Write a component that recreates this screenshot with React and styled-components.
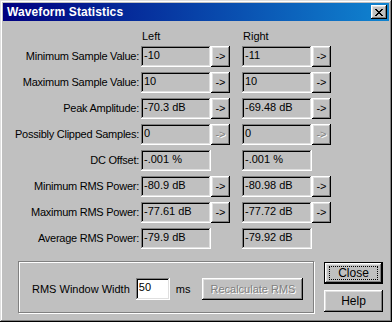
import styled, { createGlobalStyle } from "styled-components";

const GlobalStyle = createGlobalStyle`
  html, body {
    margin: 0;
    padding: 0;
    background: #c0c0c0;
  }
  body {
    font-family: "Liberation Sans", Arial, sans-serif;
    font-size: 11px;
    color: #000;
  }
`;

const ROWS = [
  { label: "Minimum Sample Value:", left: "-10", right: "-11", button: "on" },
  { label: "Maximum Sample Value:", left: "10", right: "10", button: "on" },
  { label: "Peak Amplitude:", left: "-70.3 dB", right: "-69.48 dB", button: "on" },
  { label: "Possibly Clipped Samples:", left: "0", right: "0", button: "off" },
  { label: "DC Offset:", left: "-.001 %", right: "-.001 %", button: null },
  { label: "Minimum RMS Power:", left: "-80.9 dB", right: "-80.98 dB", button: "on" },
  { label: "Maximum RMS Power:", left: "-77.61 dB", right: "-77.72 dB", button: "on" },
  { label: "Average RMS Power:", left: "-79.9 dB", right: "-79.92 dB", button: null },
];

export default function App() {
  return (
    <>
      <GlobalStyle />
      <Window>
        <TitleBar>
          <Title>Waveform Statistics</Title>
          <CloseBox aria-label="Close">
            <svg width="8" height="7" viewBox="0 0 8 7" shapeRendering="crispEdges">
              <path
                d="M0 0h2v1h-2zM6 0h2v1h-2zM1 1h2v1h-2zM5 1h2v1h-2zM2 2h4v1h-4zM3 3h2v1h-2zM2 4h4v1h-4zM1 5h2v1h-2zM5 5h2v1h-2zM0 6h2v1h-2zM6 6h2v1h-2z"
                fill="#000"
              />
            </svg>
          </CloseBox>
        </TitleBar>

        <Body>
          <HeaderRow>
            <Header $col={2}>Left</Header>
            <Header $col={5}>Right</Header>
          </HeaderRow>

          <Rows>
            {ROWS.map(r => (
              <StatRow key={r.label}>
                <Label>{r.label}</Label>
                <Field>{r.left}</Field>
                {r.button && <Arrow disabled={r.button === "off"}>-&gt;</Arrow>}
                <Field $col={5}>{r.right}</Field>
                {r.button && <Arrow disabled={r.button === "off"}>-&gt;</Arrow>}
              </StatRow>
            ))}
          </Rows>

          <Bottom>
            <Group>
              <GroupText>RMS Window Width</GroupText>
              <Input defaultValue="50" />
              <GroupText>ms</GroupText>
              <WideButton disabled>Recalculate RMS</WideButton>
            </Group>
            <SideButtons>
              <DialogButton $default>
                <Focus>Close</Focus>
              </DialogButton>
              <DialogButton>Help</DialogButton>
            </SideButtons>
          </Bottom>
        </Body>
      </Window>
    </>
  );
}

// --- STYLED COMPONENTS ---

const raised = `
  box-shadow: inset -1px -1px #000, inset 1px 1px #fff,
    inset -2px -2px #808080, inset 2px 2px #dfdfdf;
`;

const sunken = `
  box-shadow: inset -1px -1px #fff, inset 1px 1px #808080,
    inset -2px -2px #dfdfdf, inset 2px 2px #000;
`;

const COLUMNS = "138px 70px 19px 12px 70px 19px";

const Window = styled.div`
  width: 392px;
  height: 322px;
  box-sizing: border-box;
  padding: 3px;
  background: #c0c0c0;
  box-shadow: inset -1px -1px #000, inset 1px 1px #dfdfdf,
    inset -2px -2px #808080, inset 2px 2px #fff;
  display: flex;
  flex-direction: column;
`;

const TitleBar = styled.div`
  height: 18px;
  display: flex;
  align-items: center;
  justify-content: space-between;
  padding: 0 2px 0 4px;
  background: linear-gradient(90deg, #000080, #1084d0);
`;

const Title = styled.span`
  color: #fff;
  font-weight: bold;
  font-size: 12px;
  letter-spacing: 0.1px;
`;

const CloseBox = styled.button`
  width: 16px;
  height: 14px;
  padding: 0;
  border: none;
  background: #c0c0c0;
  display: flex;
  align-items: center;
  justify-content: center;
  ${raised}
`;

const Body = styled.div`
  flex: 1;
  display: flex;
  flex-direction: column;
  padding-top: 9px;
`;

const HeaderRow = styled.div`
  display: grid;
  grid-template-columns: ${COLUMNS};
  height: 13px;
  margin-bottom: 3px;
`;

const Header = styled.div`
  grid-column: ${p => p.$col};
  padding-left: 1px;
  line-height: 13px;
`;

const Rows = styled.div`
  display: flex;
  flex-direction: column;
  gap: 5px;
`;

const StatRow = styled.div`
  display: grid;
  grid-template-columns: ${COLUMNS};
  height: 21px;
`;

const Label = styled.div`
  grid-column: 1;
  text-align: right;
  padding-right: 2px;
  line-height: 21px;
  white-space: nowrap;
  letter-spacing: -0.25px;
`;

const Field = styled.div`
  grid-column: ${p => p.$col || 2};
  ${sunken}
  padding: 3px 0 0 3px;
  box-sizing: border-box;
  line-height: 13px;
  white-space: nowrap;
`;

const Arrow = styled.button`
  padding: 0;
  border: none;
  background: #c0c0c0;
  font: inherit;
  line-height: 21px;
  color: ${p => (p.disabled ? "#808080" : "#000")};
  text-shadow: ${p => (p.disabled ? "1px 1px #fff" : "none")};
  ${raised}
`;

const Bottom = styled.div`
  display: flex;
  margin-top: 12px;
  padding-left: 15px;
  gap: 10px;
`;

const Group = styled.div`
  width: 296px;
  height: 52px;
  box-sizing: border-box;
  border: 1px solid #808080;
  box-shadow: inset 1px 1px #fff, 1px 1px #fff;
  display: flex;
  align-items: center;
  padding: 4px 0 0 13px;
`;

const GroupText = styled.span`
  line-height: 13px;
  margin-right: 6px;
`;

const Input = styled.input`
  width: 34px;
  height: 22px;
  box-sizing: border-box;
  border: none;
  background: #fff;
  ${sunken}
  font: inherit;
  padding: 0 0 4px 3px;
  margin-right: 6px;
  outline: none;
`;

const WideButton = styled.button`
  width: 101px;
  height: 22px;
  margin-left: 6px;
  border: none;
  background: #c0c0c0;
  font: inherit;
  padding: 0;
  color: #808080;
  text-shadow: 1px 1px #fff;
  ${raised}
`;

const SideButtons = styled.div`
  display: flex;
  flex-direction: column;
  gap: 6px;
  padding-top: 1px;
`;

const DialogButton = styled.button`
  width: 59px;
  height: 22px;
  box-sizing: border-box;
  border: ${p => (p.$default ? "1px solid #000" : "none")};
  background: #c0c0c0;
  font: inherit;
  font-size: 12px;
  color: #000;
  padding: ${p => (p.$default ? "2px 3px" : "0")};
  display: flex;
  align-items: ${p => (p.$default ? "stretch" : "center")};
  justify-content: center;
  ${raised}
`;

const Focus = styled.span`
  flex: 1;
  display: flex;
  align-items: center;
  justify-content: center;
  outline: 1px dotted #000;
  outline-offset: -1px;
  margin: 1px;
`;
